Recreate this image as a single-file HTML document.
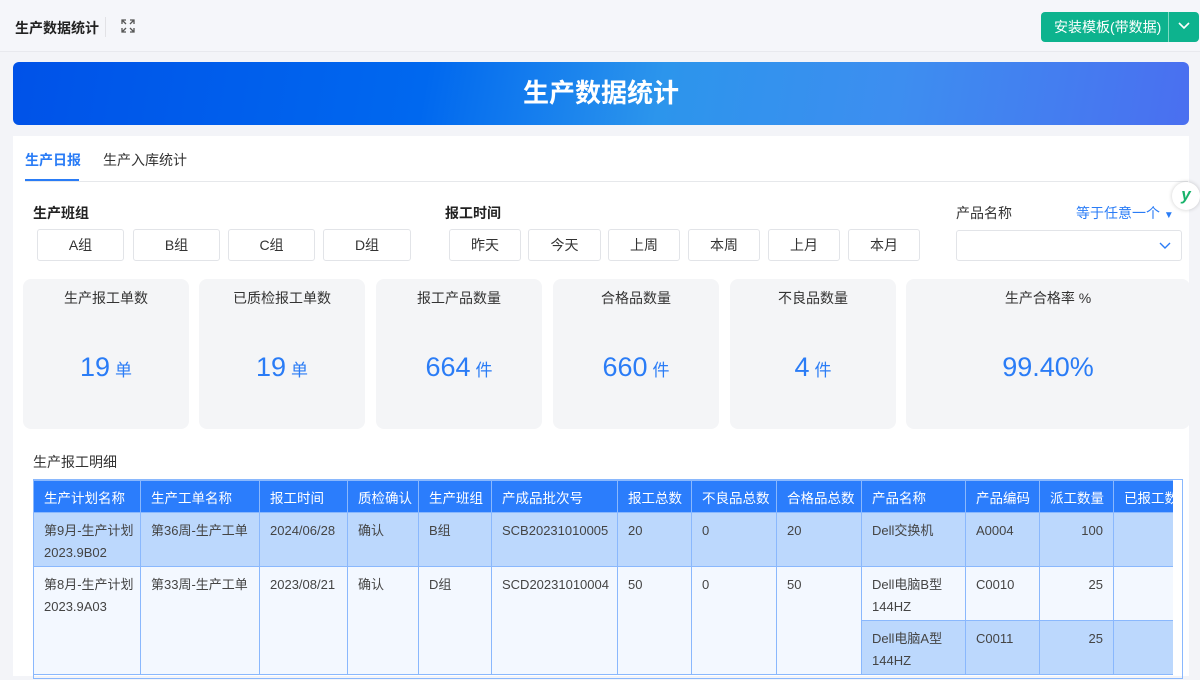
<!DOCTYPE html>
<html><head><meta charset="utf-8"><style>
*{box-sizing:border-box;margin:0;padding:0}
body{width:1200px;height:674px;overflow:hidden;background:#f3f4f8;font-family:"Liberation Sans","Noto Sans CJK SC",sans-serif;color:#333;position:relative}
.abs{position:absolute}
.top{left:0;top:0;width:1200px;height:52px;background:#f5f6fa;border-bottom:1px solid #e8e9ee}
.banner{left:13px;top:62px;width:1176px;height:63px;border-radius:6px;background:linear-gradient(100deg,#0052e8 0%,#0068ef 35%,#2c95ec 55%,#3d8ef0 75%,#4a6ff0 100%);color:#fff;font-size:26px;font-weight:bold;text-align:center;line-height:63px}
.panel{left:13px;top:136px;width:1176px;height:540px;background:#fff}
.btn{position:absolute;top:229px;height:32px;border:1px solid #e2e4e8;border-radius:3px;background:#fff;text-align:center;line-height:30px;font-size:14px;color:#333}
.card{position:absolute;top:279px;height:150px;background:#f4f5f7;border-radius:8px;text-align:center}
.card .t{margin-top:9px;font-size:14px;color:#333}
.card .v{margin-top:44px;font-size:27px;color:#2a7cf6}
.card .v small{font-size:17px;margin-left:5px}
.tw{position:absolute;left:33px;top:480px;width:1140px;height:200px;overflow:hidden}
table{width:1140px;border-collapse:collapse;table-layout:fixed;font-size:13px}
th{background:#2b7dfc;color:#fff;font-weight:normal;text-align:left;padding:0 10px;height:32px;border:1px solid #8ab8fd;white-space:nowrap;overflow:hidden;font-size:13.5px}
td{vertical-align:top;padding:7px 10px 0;line-height:22px;border:1px solid #8ab8fd;color:#444;white-space:nowrap;overflow:hidden}
.b td{background:#bcd8fd}
.l{background:#f3f8ff}
.bb{background:#bcd8fd}
</style></head><body>
<div class="abs top"></div>
<div class="abs" style="left:15px;top:18px;font-size:14px;font-weight:bold;color:#222">生产数据统计</div>
<div class="abs" style="left:105px;top:17px;width:1px;height:20px;background:#e2e2e6"></div>
<svg class="abs" style="left:121px;top:19px" width="14" height="14" viewBox="0 0 14 14" fill="none" stroke="#555" stroke-width="1.3"><path d="M1 5V1h4M1 1l4 4M13 5V1H9M13 1L9 5M1 9v4h4M1 13l4-4M13 9v4H9M13 13L9 9"/></svg>
<div class="abs" style="left:1041px;top:12px;width:158px;height:30px;background:#0db38e;border-radius:4px;color:#fff;font-size:14px;line-height:30px;padding-left:13px">安装模板(带数据)</div>
<div class="abs" style="left:1168px;top:12px;width:1px;height:30px;background:#7fdcc3"></div>
<svg class="abs" style="left:1178px;top:22px" width="12" height="8" viewBox="0 0 12 8" fill="none" stroke="#fff" stroke-width="1.6"><path d="M1 1l5 5 5-5"/></svg>
<div class="abs banner">生产数据统计</div>
<div class="abs panel"></div>
<div class="abs" style="left:25px;top:150px;font-size:14px;color:#2a7cf6;font-weight:bold">生产日报</div>
<div class="abs" style="left:103px;top:150px;font-size:14px;color:#333">生产入库统计</div>
<div class="abs" style="left:25px;top:181px;width:1163px;height:1px;background:#e6e8eb"></div>
<div class="abs" style="left:25px;top:179px;width:54px;height:2px;background:#2a7cf6"></div>
<div class="abs" style="left:1172px;top:182px;width:28px;height:28px;border-radius:50%;background:#fff;box-shadow:0 0 4px rgba(0,0,0,.2);color:#18b36b;font-weight:bold;font-size:17px;text-align:center;line-height:26px;font-style:italic">y</div>
<div class="abs" style="left:33px;top:203px;font-size:14px;font-weight:bold;color:#222">生产班组</div>
<div class="abs" style="left:445px;top:203px;font-size:14px;font-weight:bold;color:#222">报工时间</div>
<div class="abs" style="left:956px;top:203px;font-size:14px;color:#333">产品名称</div>
<div class="abs" style="left:1076px;top:203px;font-size:14px;color:#2a7cf6">等于任意一个 <span style="font-size:10px">▼</span></div>
<div class="btn" style="left:37px;width:87px">A组</div>
<div class="btn" style="left:133px;width:87px">B组</div>
<div class="btn" style="left:228px;width:87px">C组</div>
<div class="btn" style="left:323px;width:88px">D组</div>
<div class="btn" style="left:449px;width:72px">昨天</div>
<div class="btn" style="left:528px;width:73px">今天</div>
<div class="btn" style="left:608px;width:72px">上周</div>
<div class="btn" style="left:688px;width:72px">本周</div>
<div class="btn" style="left:768px;width:72px">上月</div>
<div class="btn" style="left:848px;width:72px">本月</div>
<div class="btn" style="left:956px;width:226px;top:230px;height:31px"></div>
<svg class="abs" style="left:1159px;top:242px" width="12" height="8" viewBox="0 0 12 8" fill="none" stroke="#2a7cf6" stroke-width="1.4"><path d="M1 1l5 5 5-5"/></svg>
<div class="card" style="left:23px;width:166px"><div class="t">生产报工单数</div><div class="v">19<small>单</small></div></div>
<div class="card" style="left:199px;width:166px"><div class="t">已质检报工单数</div><div class="v">19<small>单</small></div></div>
<div class="card" style="left:376px;width:166px"><div class="t">报工产品数量</div><div class="v">664<small>件</small></div></div>
<div class="card" style="left:553px;width:166px"><div class="t">合格品数量</div><div class="v">660<small>件</small></div></div>
<div class="card" style="left:730px;width:166px"><div class="t">不良品数量</div><div class="v">4<small>件</small></div></div>
<div class="card" style="left:906px;width:284px"><div class="t">生产合格率 %</div><div class="v">99.40%</div></div>
<div class="abs" style="left:33px;top:452px;font-size:14px;color:#333">生产报工明细</div>
<div class="abs" style="left:33px;top:479px;width:1150px;height:200px;border:1px solid #8ab8fd"></div>
<div class="tw"><table>
<colgroup><col style="width:107px"><col style="width:119px"><col style="width:88px"><col style="width:71px"><col style="width:73px"><col style="width:126px"><col style="width:74px"><col style="width:85px"><col style="width:85px"><col style="width:104px"><col style="width:74px"><col style="width:74px"><col style="width:60px"></colgroup>
<tr><th>生产计划名称</th><th>生产工单名称</th><th>报工时间</th><th>质检确认</th><th>生产班组</th><th>产成品批次号</th><th>报工总数</th><th>不良品总数</th><th>合格品总数</th><th>产品名称</th><th>产品编码</th><th>派工数量</th><th>已报工数</th></tr>
<tr class="b" style="height:54px"><td>第9月-生产计划<br>2023.9B02</td><td>第36周-生产工单</td><td>2024/06/28</td><td>确认</td><td>B组</td><td>SCB20231010005</td><td>20</td><td>0</td><td>20</td><td>Dell交换机</td><td>A0004</td><td style="text-align:right">100</td><td></td></tr>
<tr style="height:54px"><td class="l" rowspan="2">第8月-生产计划<br>2023.9A03</td><td class="l" rowspan="2">第33周-生产工单</td><td class="l" rowspan="2">2023/08/21</td><td class="l" rowspan="2">确认</td><td class="l" rowspan="2">D组</td><td class="l" rowspan="2">SCD20231010004</td><td class="l" rowspan="2">50</td><td class="l" rowspan="2">0</td><td class="l" rowspan="2">50</td><td class="l">Dell电脑B型<br>144HZ</td><td class="l">C0010</td><td class="l" style="text-align:right">25</td><td class="l"></td></tr>
<tr style="height:54px"><td class="bb">Dell电脑A型<br>144HZ</td><td class="bb">C0011</td><td class="bb" style="text-align:right">25</td><td class="bb"></td></tr>
</table></div>
</body></html>
